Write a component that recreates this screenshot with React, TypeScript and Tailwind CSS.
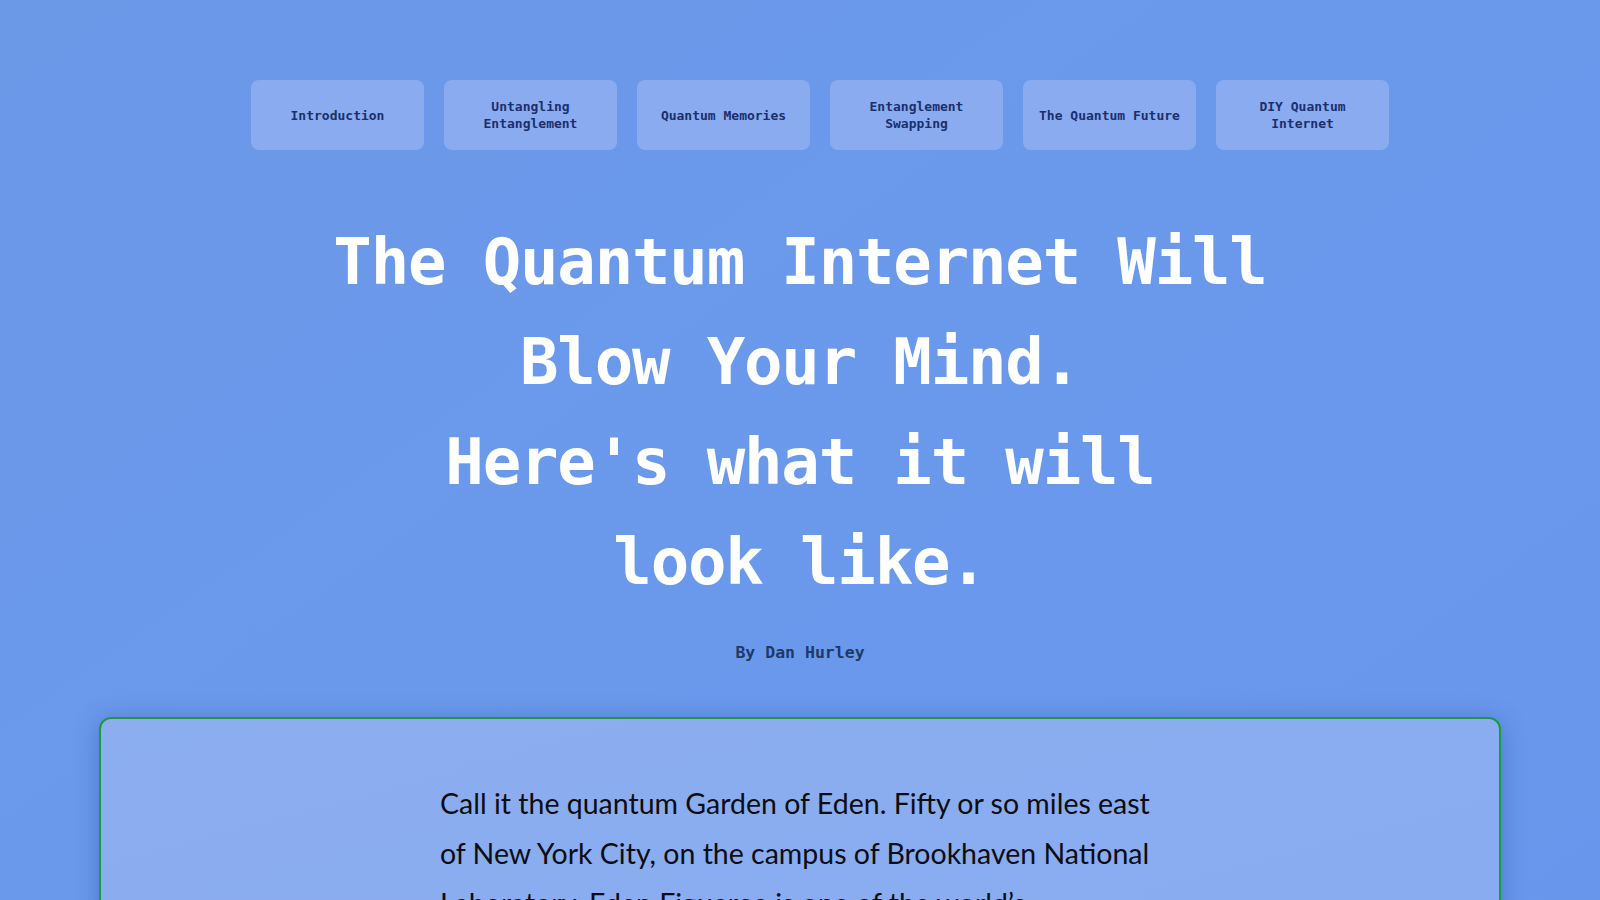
const navItems = [
  'Introduction',
  'Untangling Entanglement',
  'Quantum Memories',
  'Entanglement Swapping',
  'The Quantum Future',
  'DIY Quantum Internet',
];

const mono = "font-['DejaVu_Sans_Mono','Liberation_Mono',monospace]";

export default function App() {
  return (
    <div className="min-h-screen w-full bg-gradient-to-br from-[#6c98e8] via-[#6a99ec] to-[#6896ec] pb-10">
      <nav className="pt-[80px]">
        <ul className="flex justify-center gap-5 pl-10">
          {navItems.map((item) => (
            <li key={item}>
              <a
                href="#"
                className={`${mono} flex h-[70px] w-[173px] items-center justify-center rounded-lg bg-[#8aabf0] px-[10px] text-center text-[13px] font-bold leading-[17px] text-[#1b2f6b]`}
              >
                {item}
              </a>
            </li>
          ))}
        </ul>
      </nav>

      <header className="mt-[62px] text-center">
        <h1 className={`${mono} text-[64px] font-bold leading-[100px] tracking-[-1.2px] text-white`}>
          The Quantum Internet Will
          <br />
          Blow Your Mind.
          <br />
          Here's what it will
          <br />
          look like.
        </h1>
        <p className={`${mono} mt-[29px] text-[16.5px] font-bold leading-6 text-[#1e3a66]`}>By Dan Hurley</p>
      </header>

      <div className="mt-[52px] px-[99px]">
        <article className="rounded-xl border-2 border-[#1c9a3c] bg-gradient-to-br from-[#8caef0] to-[#88abf0] px-10 pt-[59px] pb-16 shadow-[0_4px_24px_rgba(30,60,140,0.35)]">
          <div className="mx-auto w-[712px] -translate-x-1 font-['Lato','Noto_Sans',sans-serif] text-[28.5px] leading-[50px] text-[#0d0d12]">
            <p>
              Call it the quantum Garden of Eden. Fifty or so miles east of New York City, on the campus of
              Brookhaven National Laboratory, Eden Figueroa is one of the world’s pioneering gardeners trying to
              plant the seeds of a quantum internet.
            </p>
          </div>
        </article>
      </div>
    </div>
  );
}
